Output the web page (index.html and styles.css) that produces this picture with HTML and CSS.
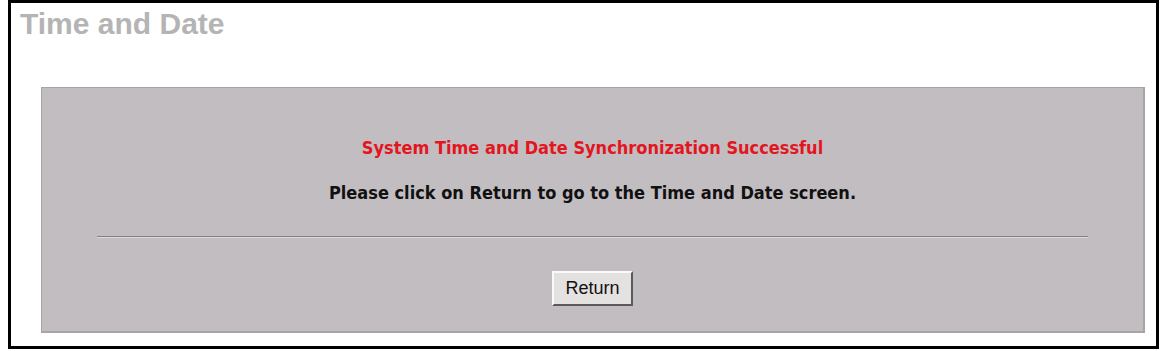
FILE: index.html
```html
<!DOCTYPE html>
<html>
<head>
<meta charset="utf-8">
<title>Time and Date</title>
<link rel="stylesheet" href="styles.css">
</head>
<body>
<div class="frame">
  <h1 class="title">Time and Date</h1>
  <div class="panel">
    <p class="msg-ok">System Time and Date Synchronization Successful</p>
    <p class="msg">Please click on Return to go to the Time and Date screen.</p>
    <hr class="rule">
    <div class="actions">
      <button class="btn" type="button">Return</button>
    </div>
  </div>
</div>
</body>
</html>
```
FILE: styles.css
```css
html, body {
  margin: 0;
  padding: 0;
  background: #fff;
}
.frame {
  box-sizing: border-box;
  margin-left: 8px;
  width: 1151px;
  height: 349px;
  border: 3px solid #000;
  display: flex;
  flex-direction: column;
}
.title {
  margin: 0;
  padding: 5px 0 0 9px;
  height: 70px;
  box-sizing: border-box;
  font-family: "Liberation Sans", Arial, sans-serif;
  font-weight: bold;
  font-size: 30px;
  line-height: 32px;
  color: #b4b4b4;
}
.panel {
  margin: 14px 11px 0 30px;
  height: 246px;
  box-sizing: border-box;
  background: #c1bdc1;
  border: 1px solid #a6a4a6;
  border-right-width: 2px;
  border-bottom-width: 2px;
  display: flex;
  flex-direction: column;
  align-items: center;
  padding-top: 48px;
}
.msg-ok, .msg {
  margin: 0;
  font-family: "DejaVu Sans Condensed", "Liberation Sans", sans-serif;
  font-stretch: condensed;
  font-weight: bold;
  font-size: 18px;
  line-height: 24px;
}
.msg-ok {
  color: #e3161f;
}
.msg {
  margin-top: 21px;
  color: #111;
}
.rule {
  width: 90%;
  margin: 31px 0 0 0;
  height: 0;
  border: 0;
  border-top: 1px solid #808080;
  border-bottom: 1px solid #dcdadc;
}
.actions {
  margin-top: 33px;
}
.btn {
  width: 81px;
  height: 35px;
  box-sizing: border-box;
  font-family: "Liberation Sans", Arial, sans-serif;
  font-size: 18px;
  color: #111;
  background: #e4e1e1;
  border: 2px solid;
  border-color: #fafafa #5a5a5a #5a5a5a #fafafa;
  padding: 0;
}
```
